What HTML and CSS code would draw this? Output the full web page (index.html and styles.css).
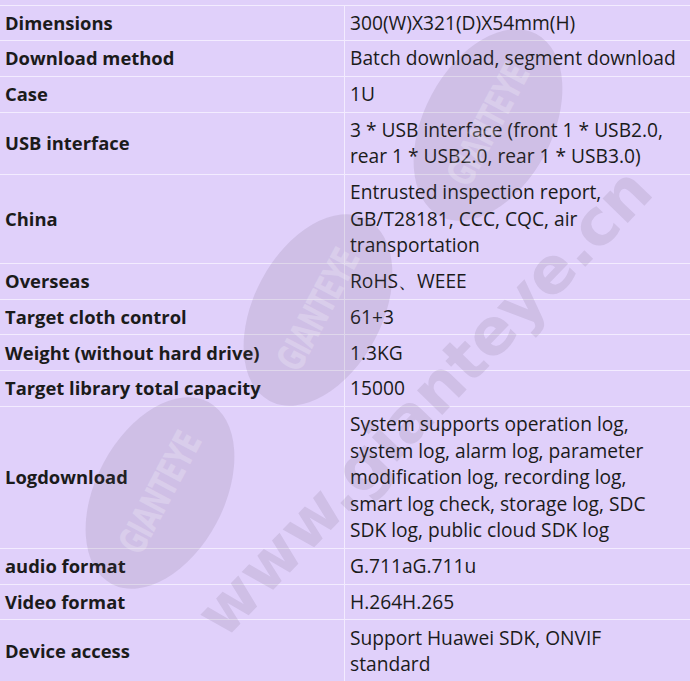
FILE: index.html
```html
<!DOCTYPE html>
<html lang="en">
<head>
    <meta charset="UTF-8">
    <meta name="viewport" content="width=device-width, initial-scale=1.0">
    <title>Specifications</title>
    <link rel="stylesheet" href="styles.css">
</head>
<body>
    <div class="spec-wrap">
        <table class="spec-table">
            <tr><th>Dimensions</th><td>300(W)X321(D)X54mm(H)</td></tr>
            <tr><th>Download method</th><td>Batch download, segment download</td></tr>
            <tr><th>Case</th><td>1U</td></tr>
            <tr><th>USB interface</th><td>3 * USB interface (front 1 * USB2.0,<br>rear 1 * USB2.0, rear 1 * USB3.0)</td></tr>
            <tr><th>China</th><td>Entrusted inspection report,<br>GB/T28181, CCC, CQC, air<br>transportation</td></tr>
            <tr><th>Overseas</th><td>RoHS、WEEE</td></tr>
            <tr><th>Target cloth control</th><td>61+3</td></tr>
            <tr><th>Weight (without hard drive)</th><td>1.3KG</td></tr>
            <tr><th>Target library total capacity</th><td>15000</td></tr>
            <tr><th>Logdownload</th><td>System supports operation log,<br>system log, alarm log, parameter<br>modification log, recording log,<br>smart log check, storage log, SDC<br>SDK log, public cloud SDK log</td></tr>
            <tr><th>audio format</th><td>G.711aG.711u</td></tr>
            <tr><th>Video format</th><td>H.264H.265</td></tr>
            <tr><th>Device access</th><td>Support Huawei SDK, ONVIF<br>standard</td></tr>
        </table>

        <div class="watermark">
            <div class="seal seal-1"><span>GIANTEYE</span></div>
            <div class="seal seal-2"><span>GIANTEYE</span></div>
            <div class="seal seal-3"><span>GIANTEYE</span></div>
            <div class="site">www.gianteye.cn</div>
        </div>
    </div>
</body>
</html>
```

FILE: styles.css
```css
html, body {
    margin: 0;
    padding: 0;
    background: #e0d0fa;
    overflow: hidden;
}
body {
    font-family: 'Open Sans', 'Noto Sans', sans-serif;
    color: #1b1b1b;
}
.spec-wrap {
    position: relative;
    padding-top: 4.5px;
    height: 677px;
}
.spec-table {
    width: 690px;
    border-collapse: collapse;
    table-layout: fixed;
    line-height: 26.5px;
}
.spec-table th,
.spec-table td {
    border: 1px solid #f3ecff;
    padding: 4.15px 5px;
    text-align: left;
    vertical-align: middle;
}
.spec-table th {
    width: 334px;
    font-size: 18.4px;
    font-weight: 700;
    border-left: none;
}
.spec-table td {
    font-size: 19.2px;
    font-weight: 400;
    border-right: none;
}
.watermark {
    position: absolute;
    top: 0;
    left: 0;
    width: 100%;
    height: 100%;
    pointer-events: none;
    overflow: hidden;
}
.seal {
    position: absolute;
    width: 206px;
    height: 128px;
    margin-left: -103px;
    margin-top: -64px;
    border-radius: 50%;
    background: rgba(90, 80, 100, 0.13);
    transform: rotate(-62deg);
    display: flex;
    align-items: center;
    justify-content: center;
}
.seal span {
    font-family: 'DejaVu Sans Condensed', 'DejaVu Sans', sans-serif;
    font-weight: 700;
    font-size: 38px;
    letter-spacing: -1px;
    color: rgba(255, 255, 255, 0.22);
    transform: scaleX(0.72);
}
.seal-1 {
    left: 488px;
    top: 125px;
}
.seal-2 {
    left: 318px;
    top: 310px;
}
.seal-3 {
    left: 160px;
    top: 493px;
}
.site {
    position: absolute;
    left: 424px;
    top: 402px;
    transform: translate(-50%, -50%) rotate(-46deg);
    font-family: 'DejaVu Sans', sans-serif;
    font-weight: 700;
    font-size: 64px;
    white-space: nowrap;
    color: rgba(90, 80, 100, 0.13);
}
```
